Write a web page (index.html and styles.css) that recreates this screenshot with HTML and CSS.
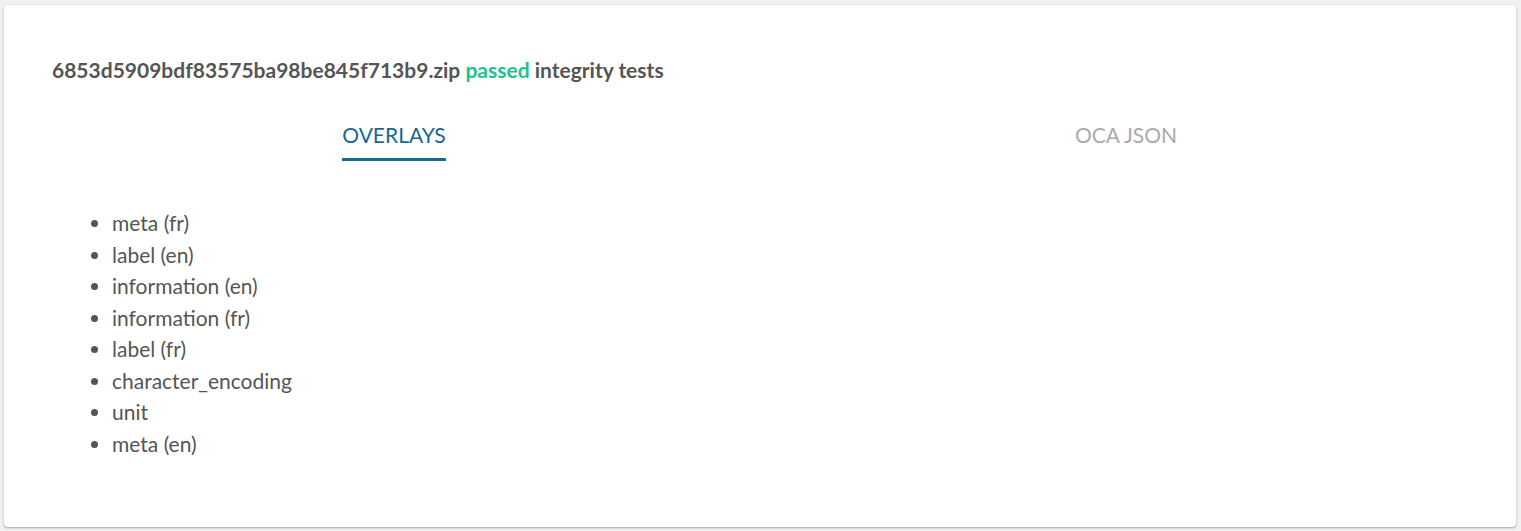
FILE: index.html
```html
<!DOCTYPE html>
<html>
<head>
<meta charset="utf-8">
<link rel="stylesheet" href="styles.css">
</head>
<body>
<div class="card">
  <div class="card-body">
    <h2 class="title">6853d5909bdf83575ba98be845f713b9.zip <span class="ok">passed</span> integrity tests</h2>
    <div class="tabs">
      <div class="tab active"><span class="tab-label">OVERLAYS</span></div>
      <div class="tab"><span class="tab-label">OCA JSON</span></div>
    </div>
    <ul class="overlays">
      <li>meta (fr)</li>
      <li>label (en)</li>
      <li>information (en)</li>
      <li>information (fr)</li>
      <li>label (fr)</li>
      <li>character_encoding</li>
      <li>unit</li>
      <li>meta (en)</li>
    </ul>
  </div>
</div>
</body>
</html>
```
FILE: styles.css
```css
html, body {
  margin: 0;
  padding: 0;
}
body {
  background: #f2f2f2;
  font-family: Lato, "Liberation Sans", sans-serif;
  color: #555;
  padding: 5px 5px 4px 4px;
  box-sizing: border-box;
  height: 531px;
}
.card {
  background: #fff;
  border-radius: 4px;
  box-shadow: 0 1px 3px rgba(0,0,0,0.25), 0 1px 1px rgba(0,0,0,0.1);
  height: 522px;
  box-sizing: border-box;
}
.card-body {
  padding: 49px 24px 0 24px;
}
.title {
  margin: 0 0 0 24px;
  font-size: 21px;
  font-weight: 700;
  line-height: 31.5px;
  color: #555;
}
.ok {
  color: #1dc28f;
}
.tabs {
  display: flex;
  margin-top: 33px;
}
.tab {
  flex: 1;
  display: flex;
  justify-content: center;
}
.tab-label {
  font-size: 21px;
  line-height: 31.5px;
  color: #aaa;
  padding-bottom: 8px;
  border-bottom: 3px solid transparent;
}
.tab.active .tab-label {
  color: #16698f;
  border-bottom-color: #16698f;
}
.overlays {
  margin: 46px 0 0 24px;
  padding-left: 60px;
  font-size: 21px;
  line-height: 31.5px;
}
```
